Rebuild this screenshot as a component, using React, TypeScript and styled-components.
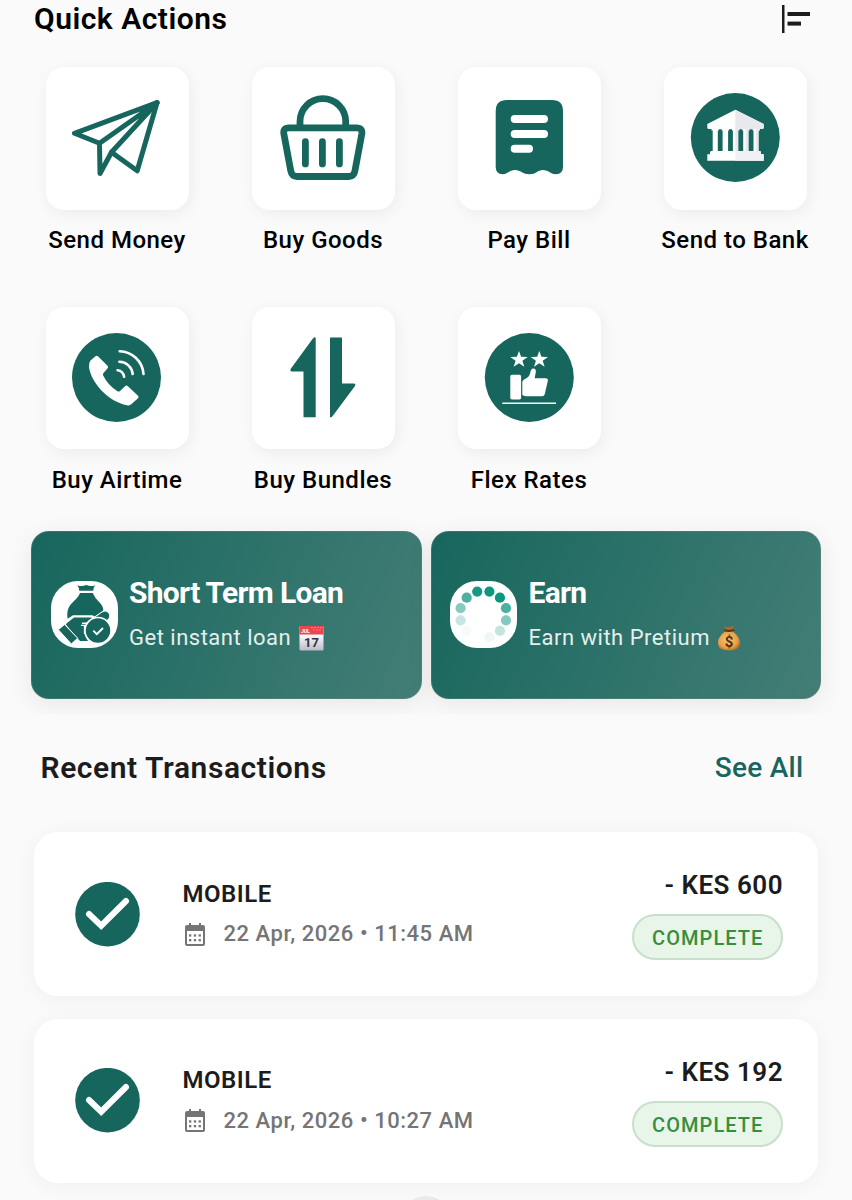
import React from 'react';
import styled, { createGlobalStyle } from 'styled-components';

const GREEN = '#17665d';

const GlobalStyle = createGlobalStyle`
  * { box-sizing: border-box; }
  html, body { margin: 0; padding: 0; background: #fafafa; }
  body { font-family: Roboto, 'Liberation Sans', sans-serif; overflow: hidden; }
  svg { display: block; flex: none; }
`;

const Page = styled.main`
  width: 852px;
  height: 1200px;
  overflow: hidden;
  background: #fafafa;
  display: flex;
  flex-direction: column;

  & > * { flex: none; }
`;

const TextLine = styled.span<{ $size: number; $weight?: number; $color?: string; $spacing?: number; $line?: number }>`
  display: block;
  margin: 0;
  white-space: nowrap;
  font-size: ${p => p.$size}px;
  font-weight: ${p => p.$weight ?? 400};
  color: ${p => p.$color ?? '#000'};
  letter-spacing: ${p => p.$spacing ?? 0}px;
  line-height: ${p => p.$line ?? 30}px;
`;

const Header = styled.header`
  display: flex;
  justify-content: space-between;
  align-items: center;
  height: 38px;
  padding: 0 42.5px 0 34px;
`;

const ActionGrid = styled.section`
  display: grid;
  grid-template-columns: repeat(4, 206px);
  grid-auto-rows: 239.5px;
  padding: 29px 14px 0;
  height: 461.5px;
`;

const Action = styled.div`
  display: flex;
  flex-direction: column;
  align-items: center;
  gap: 15.5px;
`;

const Tile = styled.div`
  width: 143px;
  height: 142.5px;
  border-radius: 18px;
  background: #fff;
  display: flex;
  align-items: center;
  justify-content: center;
  box-shadow: 2px 4px 16px rgba(0, 0, 0, 0.06);
`;

const Promos = styled.section`
  display: flex;
  gap: 9px;
  height: 214.5px;
  padding: 31px 31px 0;
  overflow: hidden;
`;

const Promo = styled.article`
  flex: 1;
  height: 168px;
  border-radius: 18px;
  border: 1.5px solid rgba(120, 140, 135, 0.35);
  background: linear-gradient(113deg, #17665d, #437e76) border-box;
  box-shadow: 0 6px 26px rgba(0, 0, 0, 0.08);
  display: flex;
  align-items: center;
  gap: 11.5px;
  padding-left: 18.5px;
`;

const PromoBadge = styled.div`
  width: 67px;
  height: 67px;
  border-radius: 27px;
  overflow: hidden;
  background: #fff;
`;

const PromoText = styled.div`
  display: flex;
  flex-direction: column;
  gap: 15px;
  padding-top: 1px;
`;

const PromoSubtitle = styled.div`
  display: flex;
  align-items: center;
  gap: 7.5px;
`;

const SectionHeader = styled.div`
  display: flex;
  justify-content: space-between;
  align-items: center;
  height: 107px;
  padding: 0 48.5px 0 40.5px;
`;

const TransactionList = styled.section`
  display: flex;
  flex-direction: column;
  gap: 22.5px;
  padding: 11px 34px 0;
`;

const Transaction = styled.article`
  height: 164px;
  border-radius: 24px;
  background: #fff;
  box-shadow: 0 3px 22px rgba(0, 0, 0, 0.045);
  display: flex;
  align-items: center;
  padding: 0 35px 0 41px;
`;

const TransactionInfo = styled.div`
  flex: 1;
  display: flex;
  flex-direction: column;
  gap: 10.5px;
  padding-left: 42.5px;
`;

const DateRow = styled.div`
  display: flex;
  align-items: center;
  gap: 18px;
  padding-left: 1px;
`;

const AmountColumn = styled.div`
  display: flex;
  flex-direction: column;
  align-items: flex-end;
  gap: 14px;
  align-self: flex-start;
  margin-top: 38px;
`;

const StatusPill = styled.div`
  width: 151.5px;
  height: 46px;
  border-radius: 23px;
  border: 2px solid #c8dfca;
  background: #e8f5e9;
  display: flex;
  align-items: center;
  justify-content: center;
  padding: 2px 0 0 1px;
`;

const BottomHandle = styled.div`
  align-self: center;
  width: 52px;
  height: 52px;
  margin-top: 13px;
  border-radius: 50%;
  background: #eaeaea;
`;

const ActionSvg = ({ children }: { children: React.ReactNode }) => (
  <svg width="96" height="96" viewBox="0 0 96 96" fill="none">{children}</svg>
);

const PlaneIcon = () => (
  <ActionSvg>
    <g stroke={GREEN} strokeWidth="5" strokeLinejoin="round" strokeLinecap="round">
      <path d="M88 12.7 5.5 43.3 30.5 53.3Z" />
      <path d="M30.5 53.3 31 83.5 42.5 62.2 88 12.7" />
      <path d="M42.5 62.2 68.2 80.8 88 12.7" />
      <path d="M72 27 85 15" strokeWidth="6" />
    </g>
  </ActionSvg>
);

const BasketIcon = () => (
  <ActionSvg>
    <g stroke={GREEN} strokeWidth="6.8" strokeLinecap="round" strokeLinejoin="round">
      <path d="M25 37V31.5A22.8 22.8 0 0 1 70.7 31.5V37" />
      <path d="M14 37.8H81.5Q87.8 37.8 86.8 44L80 80.5Q79 86.5 73.5 86.5H22Q16.8 86.5 15.7 80.5L8.9 44Q7.8 37.8 14 37.8Z" />
      <path d="M30.4 51.7V73.9M47.4 51.7V73.9M64.4 51.7V73.9" />
    </g>
  </ActionSvg>
);

const BillIcon = () => (
  <ActionSvg>
    <path fill={GREEN} d="M26 10H71Q82 10 82 21V77Q82 84 75 84.3C70 84.3 67.5 80 62 80S55 84.3 48.5 84.3 39.5 80 34 80 26.5 84.3 21.5 84.3Q14.7 84 14.7 77V21Q14.7 10 26 10Z" />
    <path stroke="#fff" strokeWidth="8" strokeLinecap="round" d="M33.7 29H63M33.7 44H63M33.7 58.7H48" />
  </ActionSvg>
);

const BankIcon = () => (
  <ActionSvg>
    <circle cx="48.3" cy="47.5" r="44.5" fill={GREEN} />
    <path fill="#fff" d="M48.3 19.7 20.3 34V37.8Q20.3 39 22 39H24.5V40.5H25.7V61H24Q23 61 23 64.3H20.3V70.7H76.7V64.3H74Q74 61 73 61H71.5V40.5H72.7V39H75Q76.7 39 76.7 37.8V34Z" />
    <path fill="#e8e9ee" d="M48.3 19.7 76.7 34V37.8Q76.7 39 75 39H48.3Z" />
    <path fill="#f0f1f4" d="M48.3 61H73Q74 61 74 64.3H76.7V70.7H48.3Z" />
    <path fill="#e8e9ee" d="M58.7 39H62V61H58.7ZM68.8 39H72.7V40.5H71.5V61H68.8ZM48.3 39H52V61H48.3Z" />
    <g fill={GREEN}>
      {[30.8, 41.1, 51.4, 61.7].map(x => (
        <path key={x} d={`M${x + 0.9} 39.3H${x + 3.9}V40.5H${x + 4.8}V61H${x}V40.5H${x + 0.9}Z`} />
      ))}
    </g>
  </ActionSvg>
);

const PhoneIcon = () => (
  <ActionSvg>
    <circle cx="47.5" cy="47.5" r="44.5" fill={GREEN} />
    <path fill="#fff" d="M26.5 26.2Q27.9 25.2 29.2 26.5L38.5 35.8Q39.6 37 38.6 38.2L34.3 43.3Q33.5 44.5 34.3 45.8 39 55.5 48.5 61.2 49.8 62 51 60.9L56 56.2Q57.5 54.9 58.9 56.2L69 65.7Q70.3 67 69 68.3L62 74.6Q60.5 75.8 58 75.2C40 72 22 53 20 37Q19.7 32.5 21.5 30.5Z" />
    <g stroke="#fff" strokeWidth="2.6" strokeLinecap="round">
      <path d="M48.6 40.2A7.5 7.5 0 0 1 55.1 46.8" />
      <path d="M50.4 31.8A13.5 13.5 0 0 1 63.7 44" />
      <path d="M50.7 21.3A24.5 24.5 0 0 1 74.5 44" />
    </g>
  </ActionSvg>
);

const BundlesIcon = () => (
  <ActionSvg>
    <path fill={GREEN} d="M40.7 8.8V87.3H28.5V41.5H17Q14.5 41.5 15.8 38.8L37.7 8.7Q40.7 6 40.7 8.8Z" />
    <path fill={GREEN} d="M55 7.5H67V53.5H78.5Q81.5 53.5 79.8 56.3L57.5 86.2Q55 88.7 55 86.2Z" />
  </ActionSvg>
);

const STAR = 'M0 -8.5 2.1 -2.7 8.7 -2.6 3.4 1.3 5.3 7.3 0 3.7 -5.3 7.3 -3.4 1.3 -8.7 -2.6 -2.1 -2.7Z';

const RatesIcon = () => (
  <ActionSvg>
    <circle cx="48.3" cy="47.5" r="44.5" fill={GREEN} />
    <path fill="#fff" transform="translate(38 29.5)" d={STAR} />
    <path fill="#fff" transform="translate(58.3 29.5)" d={STAR} />
    <rect x="29.3" y="44.8" width="10.8" height="24.7" rx="1.7" fill="#fff" />
    <path fill="#fff" d="M41.3 51.5 43 49.5Q48.5 47.5 49.3 42.5 50 38.5 52.3 38.5 55.3 38.5 54.8 42L53.7 48.2H64.5Q67.5 48.2 66.8 51L63.8 64Q63.3 66.3 61 66.3H46Q43.5 66.3 41.3 65Z" />
    <path stroke="#fff" strokeWidth="1.6" d="M21.3 73.3H75" />
  </ActionSvg>
);

const SortIcon = () => (
  <svg width="28" height="28" viewBox="0 0 28 28" fill="#1c1c1c">
    <rect x="0" y="0" width="2.5" height="28" />
    <rect x="5.5" y="7" width="22.5" height="4" />
    <rect x="5.5" y="16.6" width="13.5" height="4" />
  </svg>
);

const LoanIcon = () => (
  <svg width="67" height="67" viewBox="0 0 67 67" fill={GREEN}>
    <path d="M26.3 4.2Q30.5 6 35.2 4 40 6 44.2 4.2Q42 7 42.3 9.8H28.2Q28.500 7 26.300 4.200Z" />
    <path d="M29 12H41.700Q44 17.500 49 22 52.500 25.500 52.300 29.500L43.500 35.500 41.500 34.300H22L16.700 37.800C15 29 18.500 24 22.500 20.500Q27.500 16 29 12Z" />
    <path d="M15.800 42.300 23 36.500H40L42.800 38.500 38.500 41.500H31V43H36C33 48 33.500 54 37 60H29L14.800 43.500Z" />
    <path d="M43.500 36.800 50 32.200Q54 28.800 57 31.800 59.500 35 57 38L54.800 39.800Q50 37 43.500 38Z" />
    <path d="M13.5 43.5 26.7 57.2 20.3 63 7.3 48.7Z" stroke="#fff" strokeWidth="1" />
    <path d="M30 44.3H33.5V53" fill="none" stroke="#fff" strokeWidth="1.3" />
    <circle cx="47" cy="49.6" r="13.1" stroke="#fff" strokeWidth="1.7" />
    <path d="M42.300 49.700 45.800 53.200 52 47" fill="none" stroke="#fff" strokeWidth="1.8" />
  </svg>
);

const DOT_OPACITY = [1, 1, 0.75, 0.5, 0.25, 0.07, 0, 0.04, 0.24, 0.5, 0.75, 0.97];

const EarnIcon = () => (
  <svg width="67" height="67" viewBox="0 0 67 67" fill="#0d9680">
    {DOT_OPACITY.map((opacity, i) => {
      const angle = ((i * 30 + 15) * Math.PI) / 180;
      return <circle key={i} cx={33.3 + 23.5 * Math.sin(angle)} cy={33.3 - 23.5 * Math.cos(angle)} r="5.1" opacity={opacity} />;
    })}
  </svg>
);

const CalendarEmoji = () => (
  <svg width="25" height="26" viewBox="0 0 25 26">
    <defs>
      <linearGradient id="paper" x1="0" y1="0" x2="0" y2="1">
        <stop offset="0.4" stopColor="#f7f7fa" />
        <stop offset="1" stopColor="#b9bbc9" />
      </linearGradient>
    </defs>
    <rect x="0.5" y="1" width="24" height="24.5" rx="1" fill="url(#paper)" />
    <path d="M0.5 1.5Q0.5 1 1 1H24Q24.5 1 24.5 1.5V9.5H0.5Z" fill="#e9474d" />
    <path d="M12 2.5H23M14 5H23" stroke="#f47b7c" strokeWidth="1" strokeDasharray="2 1" />
    <text x="2" y="7.5" fontFamily="Roboto" fontSize="5" fontWeight="700" fill="#fff">JUL</text>
    <text x="12.4" y="22.3" textAnchor="middle" fontFamily="Roboto" fontSize="13" fontWeight="700" fill="#33333a">17</text>
  </svg>
);

const MoneyBagEmoji = () => (
  <svg width="24" height="26" viewBox="0 0 24 26">
    <defs>
      <radialGradient id="bag" cx="0.45" cy="0.45" r="0.6">
        <stop offset="0" stopColor="#f9c873" />
        <stop offset="0.7" stopColor="#e7a048" />
        <stop offset="1" stopColor="#b96a20" />
      </radialGradient>
    </defs>
    <path d="M7 1 12 2.5 17 .5 15.5 5H9Z" fill="#a86a31" />
    <path d="M8.5 6H15.5C19 9 23.5 13 23 19Q22.5 25.5 12 25.5T1 19C.5 13 5 9 8.5 6Z" fill="url(#bag)" />
    <path d="M7.5 5.3Q12 7 17 4.8" stroke="#5e3212" strokeWidth="2" fill="none" />
    <text x="12" y="21.5" textAnchor="middle" fontFamily="Roboto" fontSize="15" fontWeight="700" fill="#53300f">$</text>
  </svg>
);

const CheckIcon = () => (
  <svg width="65" height="65" viewBox="0 0 65 65" fill="none">
    <circle cx="32.5" cy="32.2" r="32.3" fill={GREEN} />
    <path d="M14 32 26.2 43.700 51 19" stroke="#fff" strokeWidth="6" strokeLinecap="round" strokeLinejoin="miter" />
  </svg>
);

const CalendarIcon = () => (
  <svg width="22" height="23" viewBox="0 0 22 23" fill="#757575">
    <path fillRule="evenodd" d="M5 0H7V2H15V0H17V2H19Q21 2 21 4V21Q21 23 19 23H3Q1 23 1 21V4Q1 2 3 2H5ZM3 8V21H19V8Z" />
    {[11.3, 16].map(y => [5, 9.8, 14.6].map(x => <rect key={`${x}-${y}`} x={x} y={y} width="2.3" height="2.3" />))}
  </svg>
);

const ACTIONS = [
  { label: 'Send Money', Icon: PlaneIcon },
  { label: 'Buy Goods', Icon: BasketIcon },
  { label: 'Pay Bill', Icon: BillIcon },
  { label: 'Send to Bank', Icon: BankIcon },
  { label: 'Buy Airtime', Icon: PhoneIcon },
  { label: 'Buy Bundles', Icon: BundlesIcon },
  { label: 'Flex Rates', Icon: RatesIcon },
];

const PROMOS = [
  { title: 'Short Term Loan', subtitle: 'Get instant loan', Icon: LoanIcon, Emoji: CalendarEmoji },
  { title: 'Earn', subtitle: 'Earn with Pretium', Icon: EarnIcon, Emoji: MoneyBagEmoji },
];

const TRANSACTIONS = [
  { date: '22 Apr, 2026 • 11:45 AM', amount: '- KES 600' },
  { date: '22 Apr, 2026 • 10:27 AM', amount: '- KES 192' },
];

export default function App() {
  return (
    <>
      <GlobalStyle />
      <Page>
        <Header>
          <TextLine as="h1" $size={30} $weight={600} $spacing={0.5}>Quick Actions</TextLine>
          <SortIcon />
        </Header>
        <ActionGrid>
          {ACTIONS.map(({ label, Icon }) => (
            <Action key={label}>
              <Tile><Icon /></Tile>
              <TextLine $size={24} $weight={500} $spacing={0.5}>{label}</TextLine>
            </Action>
          ))}
        </ActionGrid>
        <Promos>
          {PROMOS.map(({ title, subtitle, Icon, Emoji }) => (
            <Promo key={title}>
              <PromoBadge><Icon /></PromoBadge>
              <PromoText>
                <TextLine $size={30} $weight={700} $color="#fff" $spacing={-0.7}>{title}</TextLine>
                <PromoSubtitle>
                  <TextLine $size={22} $color="#e4efed" $spacing={0.5}>{subtitle}</TextLine>
                  <Emoji />
                </PromoSubtitle>
              </PromoText>
            </Promo>
          ))}
        </Promos>
        <SectionHeader>
          <TextLine as="h2" $size={30} $weight={600} $color="#1c1c1c" $spacing={0.57}>Recent Transactions</TextLine>
          <TextLine $size={28} $weight={500} $color={GREEN} $spacing={0.3}>See All</TextLine>
        </SectionHeader>
        <TransactionList>
          {TRANSACTIONS.map(({ date, amount }) => (
            <Transaction key={date}>
              <CheckIcon />
              <TransactionInfo>
                <TextLine $size={24} $weight={600} $color="#1c1c1c" $spacing={0.5}>MOBILE</TextLine>
                <DateRow>
                  <CalendarIcon />
                  <TextLine $size={22} $weight={500} $color="#757575" $spacing={0.54}>{date}</TextLine>
                </DateRow>
              </TransactionInfo>
              <AmountColumn>
                <TextLine $size={26} $weight={600} $color="#1c1c1c" $spacing={0.5}>{amount}</TextLine>
                <StatusPill>
                  <TextLine $size={20} $weight={500} $color="#388e3c" $spacing={1.05}>COMPLETE</TextLine>
                </StatusPill>
              </AmountColumn>
            </Transaction>
          ))}
        </TransactionList>
        <BottomHandle />
      </Page>
    </>
  );
}
